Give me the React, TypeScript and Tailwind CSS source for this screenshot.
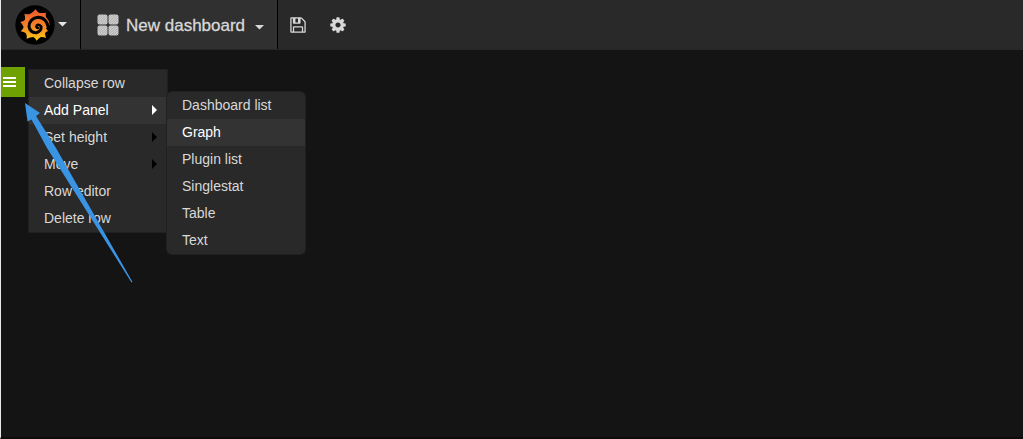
const FLOPPY =
  "M512 1536h768v-384h-768v384zM1408 1536h128v-896q0-14-10-38.5t-20-34.5l-281-281q-10-10-34-20t-39-10v416q0 40-28 68t-68 28h-576q-40 0-68-28t-28-68v-416h-128v1280h128v-416q0-40 28-68t68-28h832q40 0 68 28t28 68v416zM896 608v-320q0-13-9.5-22.5t-22.5-9.5h-192q-13 0-22.5 9.5t-9.5 22.5v320q0 13 9.5 22.5t22.5 9.5h192q13 0 22.5-9.5t9.5-22.5zM1664 640v928q0 40-28 68t-68 28h-1344q-40 0-68-28t-28-68v-1344q0-40 28-68t68-28h928q40 0 88 20t76 48l280 280q28 28 48 76t20 88z";
const COG =
  "M1152 896q0-106-75-181t-181-75-181 75-75 181 75 181 181 75 181-75 75-181zm512-109v222q0 12-8 23t-20 13l-185 28q-19 54-39 91 35 50 107 138 10 12 10 25t-9 23q-27 37-99 108t-94 71q-12 0-26-9l-138-108q-44 23-91 38-16 136-29 186-7 28-36 28h-222q-14 0-24.5-8.5t-11.5-21.5l-28-184q-49-16-90-37l-141 107q-10 9-25 9-14 0-25-11-126-114-165-168-7-10-7-23 0-12 8-23 15-21 51-66.5t54-70.5q-27-50-41-99l-183-27q-13-2-21-12.5t-8-23.5v-222q0-12 8-23t19-13l186-28q14-46 39-92-40-57-107-138-10-12-10-24 0-10 9-23 26-36 98.5-107.5t94.5-71.5q13 0 26 10l138 107q44-23 91-38 16-136 29-186 7-28 36-28h222q14 0 24.5 8.5t11.5 21.5l28 184q49 16 90 37l142-107q9-9 24-9 13 0 25 10 129 119 165 170 7 8 7 22 0 12-8 23-15 21-51 66.5t-54 70.5q26 50 41 98l183 28q13 2 21 12.5t8 23.5z";

type Item = { label: string; active?: boolean; children?: Item[]; more?: boolean };

const ROW_MENU: Item[] = [
  { label: "Collapse row" },
  {
    label: "Add Panel",
    active: true,
    more: true,
    children: [
      { label: "Dashboard list" },
      { label: "Graph", active: true },
      { label: "Plugin list" },
      { label: "Singlestat" },
      { label: "Table" },
      { label: "Text" },
    ],
  },
  { label: "Set height", more: true },
  { label: "Move", more: true },
  { label: "Row editor" },
  { label: "Delete row" },
];

function Logo() {
  return (
    <svg className="size-10" viewBox="45 14 120 120" aria-hidden="true">
      <defs>
        <linearGradient id="flame" x1="0" y1="0" x2="0" y2="1">
          <stop offset="0" stopColor="#ef5a2c" />
          <stop offset="0.5" stopColor="#f4802a" />
          <stop offset="1" stopColor="#fcc913" />
        </linearGradient>
      </defs>
      <circle cx="105" cy="74" r="59" fill="#000" />
      <path
        fill="url(#flame)"
        d="M107 27Q112 36 119 38Q128 39 138 37Q136 45 138 50Q147 60 149 73L143 80L138 84Q140 88 144 92Q137 95 135 99Q136 106 138 113Q129 109 123 110Q116 114 110 121Q105 112 100 110Q91 111 80 115Q81 105 78 99Q72 95 62 93Q70 86 71 80Q68 72 61 65Q70 64 75 58Q76 50 73 40Q83 43 91 40Q100 35 107 27Z"
      />
      <g fill="none" stroke="#000" strokeLinecap="round">
        <path
          strokeWidth="9"
          d="M146 85C142 63 130 51 114 51C98 52 87 63 87 78C88 91 98 98 109 97C119 95 125 87 123 79"
        />
        <path strokeWidth="7" d="M123 79C120 71 110 72 109 78C109 81 111 83 114 83" />
      </g>
    </svg>
  );
}

function Glyph({ d }: { d: string }) {
  return (
    <svg className="size-[18px]" viewBox="0 0 1792 1792" fill="currentColor" aria-hidden="true">
      <path d={d} />
    </svg>
  );
}

function CaretDown() {
  return (
    <svg className="h-[5px] w-[9px]" viewBox="0 0 9 5" fill="currentColor" aria-hidden="true">
      <path d="M0 0h9L4.500 4.500z" />
    </svg>
  );
}

function DashboardIcon() {
  return (
    <svg className="size-[22px]" viewBox="0 0 22 22" aria-hidden="true">
      <defs>
        <pattern id="hatch" width="2.5" height="2.5" patternUnits="userSpaceOnUse">
          <rect width="2.5" height="2.5" fill="#d0d0d0" />
          <path d="M-1 1l2-2M0 2.5l2.5-2.5M1.500 3.500l2-2" stroke="#a0a0a0" strokeWidth="0.8" />
        </pattern>
      </defs>
      <g fill="url(#hatch)">
        <rect x="0.5" y="0.5" width="10" height="10" rx="2" />
        <rect x="11.5" y="0.5" width="10" height="10" rx="2" />
        <rect x="0.5" y="11.5" width="10" height="10" rx="2" />
        <rect x="11.5" y="11.5" width="10" height="10" rx="2" />
      </g>
    </svg>
  );
}

function MenuItem({ item }: { item: Item }) {
  return (
    <li className="relative">
      <button
        type="button"
        className={
          "flex h-[27px] w-full items-center justify-between pr-2.5 pb-0.5 pl-[15px] text-left " +
          (item.active ? "bg-[#333333] text-white" : "text-[#d8d8d8]")
        }
      >
        {item.label}
        {item.more && (
          <svg
            className={"h-2.5 w-[5px] " + (item.active ? "text-white" : "text-black")}
            viewBox="0 0 5 10"
            fill="currentColor"
            aria-hidden="true"
          >
            <path d="M0 0l5 5-5 5z" />
          </svg>
        )}
      </button>
      {item.children && (
        <ul className="absolute -top-1.5 left-full -ml-px w-[140px] overflow-hidden rounded-md border border-[#202020] bg-[#292929]">
          {item.children.map((child) => (
            <MenuItem key={child.label} item={child} />
          ))}
        </ul>
      )}
    </li>
  );
}

export default function App() {
  return (
    <div className="relative min-h-screen border-b-2 border-l border-b-[#110a0d] border-l-[#e8e8e8] bg-[#141414] font-['Liberation_Sans',Arial,sans-serif] text-sm text-[#d8d8d8]">
      <header className="flex h-[50px] border-b border-[#262626] bg-[#292929]">
        <button
          type="button"
          aria-label="Main menu"
          className="flex items-center gap-[3px] border-r border-black bg-[#303030] pr-[13px] pl-3.5 text-[#e5e5e5]"
        >
          <Logo />
          <CaretDown />
        </button>
        <button
          type="button"
          className="flex items-center border-r border-black bg-[#303030] pr-[13px] pl-4 text-[17px] text-[#d8d8d8]"
        >
          <DashboardIcon />
          <span className="mr-2.5 ml-[7px] pt-1 [-webkit-text-stroke:0.3px_#d8d8d8]">
            New dashboard
          </span>
          <span className="flex pt-1.5">
            <CaretDown />
          </span>
        </button>
        <button type="button" aria-label="Save dashboard" className="px-[11px]">
          <Glyph d={FLOPPY} />
        </button>
        <button type="button" aria-label="Settings" className="px-[11px]">
          <Glyph d={COG} />
        </button>
      </header>

      <main className="flex items-start gap-[3px] pt-[17px]">
        <button
          type="button"
          aria-label="Row menu"
          className="flex h-[30px] w-6 items-center bg-[#6ea203] pl-0.5 text-white"
        >
          <svg className="h-2.5 w-[13px]" viewBox="0 0 13 10" fill="currentColor" aria-hidden="true">
            <path d="M0 0h13v2H0zM0 4h13v2H0zM0 8h13v2H0z" />
          </svg>
        </button>
        <ul className="mt-0.5 w-[140px] border border-[#202020] bg-[#292929]">
          {ROW_MENU.map((item) => (
            <MenuItem key={item.label} item={item} />
          ))}
        </ul>
      </main>

      <svg
        className="pointer-events-none absolute top-[103px] left-6 h-[180px] w-[108px]"
        viewBox="0 0 108 180"
        fill="#3a94e4"
        aria-hidden="true"
      >
        <path d="M0 0l15 10-4 3L31 45 107.500 179 106.500 179.500 22 45 6.500 16.500 2.500 18.500z" />
      </svg>
    </div>
  );
}
